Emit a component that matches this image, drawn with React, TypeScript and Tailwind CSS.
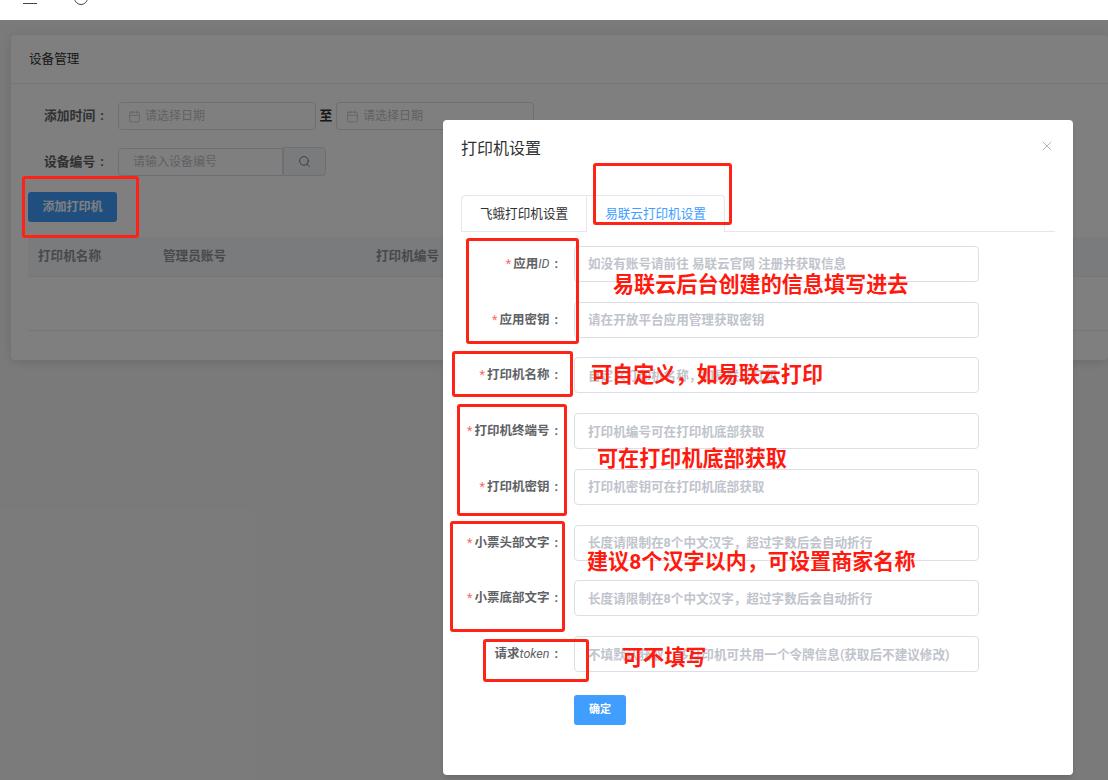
import React from 'react';
import {Calendar, Search, X} from 'lucide-react';

const cjk = "font-['Roboto','Noto_Sans_CJK_SC',sans-serif]";

interface Field {
    label: React.ReactNode;
    placeholder: string;
    required: boolean;
}

const fields: Field[] = [
    {label: <>应用<i className="font-normal">ID</i></>, placeholder: '如没有账号请前往 易联云官网 注册并获取信息', required: true},
    {label: '应用密钥', placeholder: '请在开放平台应用管理获取密钥', required: true},
    {label: '打印机名称', placeholder: '自定义打印机名称，如易联云打印', required: true},
    {label: '打印机终端号', placeholder: '打印机编号可在打印机底部获取', required: true},
    {label: '打印机密钥', placeholder: '打印机密钥可在打印机底部获取', required: true},
    {label: '小票头部文字', placeholder: '长度请限制在8个中文汉字，超过字数后会自动折行', required: true},
    {label: '小票底部文字', placeholder: '长度请限制在8个中文汉字，超过字数后会自动折行', required: true},
    {label: <>请求<i className="font-normal">token</i></>, placeholder: '不填默认获取，多打印机可共用一个令牌信息(获取后不建议修改)', required: false},
];

// red marks drawn on top of the screenshot
const redBoxes = [
    'left-[22px] top-[176px] w-[117px] h-[62px]',
    'left-[593px] top-[163px] w-[139px] h-[62px]',
    'left-[466px] top-[238px] w-[113px] h-[106px]',
    'left-[452px] top-[351px] w-[121px] h-[46px]',
    'left-[457px] top-[404px] w-[110px] h-[112px]',
    'left-[450px] top-[521px] w-[115px] h-[111px]',
    'left-[483px] top-[639px] w-[106px] h-[43px]',
];

const notes = [
    {text: '易联云后台创建的信息填写进去', pos: 'left-[613px] top-[271px]'},
    {text: '可自定义，如易联云打印', pos: 'left-[591px] top-[361px]'},
    {text: '可在打印机底部获取', pos: 'left-[597px] top-[445px]'},
    {text: '建议8个汉字以内，可设置商家名称', pos: 'left-[587px] top-[548px]'},
    {text: '可不填写', pos: 'left-[622px] top-[644px]'},
];

const DateInput = () => (
    <div className="w-[198px] h-[28px] flex items-center pl-[9px] gap-[4px] border border-[#dcdfe6] rounded bg-white text-[12px] font-normal text-[#c0c4cc]">
        <Calendar size={13} strokeWidth={1.5}/>
        请选择日期
    </div>
);

const FilterLabel = ({children}: {children: string}) => (
    <span className="w-[74px] whitespace-nowrap">
        {children}<span className="ml-[5px]">:</span>
    </span>
);

export default function App() {
    return (
        <div className={`relative w-[1108px] h-[780px] overflow-hidden bg-white ${cjk}`}>
            <div className="h-5 flex items-start pl-[23px] gap-[37px] overflow-hidden">
                <div className="w-[14px] h-px bg-[#444] mt-[3px]"/>
                <div className="w-[14px] h-[14px] shrink-0 rounded-full border border-[#444] -mt-[9px]"/>
            </div>

            {/* page behind the dialog */}
            <div className="h-[760px] bg-[#f5f5f5] pt-[15px] pl-[11px]">
                <div className="h-[325px] bg-white rounded-sm shadow-[0_2px_12px_rgba(0,0,0,0.12)]">
                    <div className="h-[49px] flex items-center pl-[18px] border-b border-[#ebeef5] text-[12.6px] text-[#303133]">
                        设备管理
                    </div>
                    <div className="pt-[18px] pl-[33px] text-[12.8px] font-bold text-[#606266]">
                        <div className="flex items-center">
                            <FilterLabel>添加时间</FilterLabel>
                            <DateInput/>
                            <span className="w-[20px] text-center text-[#303133]">至</span>
                            <DateInput/>
                        </div>
                        <div className="flex items-center mt-[17px]">
                            <FilterLabel>设备编号</FilterLabel>
                            <div className="w-[165px] h-[28px] flex items-center pl-[14px] border border-[#dcdfe6] rounded-l bg-white text-[12px] font-normal text-[#c0c4cc]">
                                请输入设备编号
                            </div>
                            <div className="w-[43px] h-[29px] flex items-center justify-center border border-[#dcdfe6] rounded-r bg-[#f5f7fa] text-[#606266]">
                                <Search size={13} strokeWidth={1.5}/>
                            </div>
                        </div>
                    </div>
                    <div className="pl-[17px] mt-[16px]">
                        <button className="w-[89px] h-[30px] rounded-[3px] bg-[#409eff] text-white text-[12px] font-bold">
                            添加打印机
                        </button>
                    </div>
                    <div className="ml-[17px] mt-[15px] text-[12.6px] font-bold text-[#909399]">
                        <div className="h-[40px] flex items-center pl-[10px] bg-[#f5f7fa] border-b border-[#ebeef5]">
                            <span className="w-[125px]">打印机名称</span>
                            <span className="w-[213px]">管理员账号</span>
                            <span>打印机编号</span>
                        </div>
                        <div className="h-[54px] border-b border-[#ebeef5]"/>
                    </div>
                </div>
            </div>

            {/* dim layer and dialog */}
            <div className="absolute left-0 right-0 top-5 bottom-0 bg-black/50"/>
            <div className="absolute left-[443px] top-[120px] w-[630px] h-[655px] bg-white rounded-sm shadow-md px-[18px]">
                <div className="h-[75px] flex items-start justify-between pt-[18px]">
                    <span className="text-[16px] leading-[22px] text-[#303133]">打印机设置</span>
                    <X size={16} strokeWidth={1} className="text-[#909399]"/>
                </div>
                <div className="flex h-[37px] border-b border-[#e4e7ed] text-[12.6px]">
                    <div className="w-[126px] h-[37px] flex items-center justify-center pt-px border border-[#e4e7ed] rounded-tl text-[#303133]">
                        飞蛾打印机设置
                    </div>
                    <div className="w-[138px] h-[37px] flex items-center justify-center pt-px border border-l-0 border-b-0 border-[#e4e7ed] rounded-tr bg-white text-[#409eff]">
                        易联云打印机设置
                    </div>
                </div>
                <form className="mt-[13.8px] flex flex-col gap-[19.75px]">
                    {fields.map((field, index) => (
                        <div key={index} className="flex items-center h-9">
                            <label className="w-[113px] shrink-0 pr-[16px] pt-px text-right text-[12.5px] font-bold text-[#606266] whitespace-nowrap">
                                {field.required && <span className="text-[#f56c6c] font-normal mr-[2px]">*</span>}
                                {field.label}
                                <span className="ml-[5px]">:</span>
                            </label>
                            <input
                                readOnly
                                placeholder={field.placeholder}
                                className="w-[405px] h-9 px-[13px] border border-[#dcdfe6] rounded text-[12.6px] font-bold outline-none placeholder:text-[#c0c4cc]"
                            />
                        </div>
                    ))}
                </form>
                <button className="block ml-[113px] mt-[23px] w-[52px] h-[30px] rounded-[3px] bg-[#409eff] text-white text-[11px] font-bold">
                    确定
                </button>
            </div>

            {redBoxes.map(box => (
                <div key={box} className={`absolute ${box} border-[3px] border-[#ff2317] rounded-[3px]`}/>
            ))}
            {notes.map(note => (
                <div key={note.text} className={`absolute ${note.pos} text-[21.1px] leading-[28px] font-bold text-[#ff1a0f] whitespace-nowrap`}>
                    {note.text}
                </div>
            ))}
        </div>
    );
}
